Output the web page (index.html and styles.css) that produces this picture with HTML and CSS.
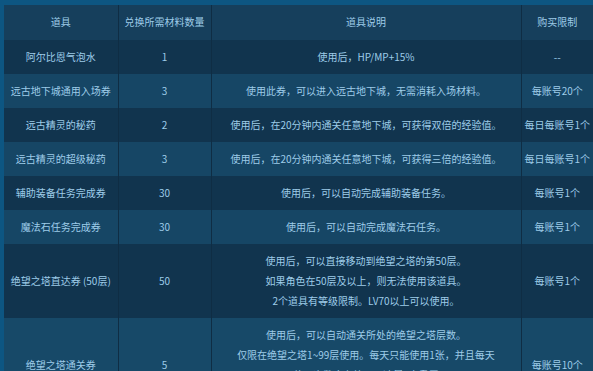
FILE: index.html
```html
<!DOCTYPE html>
<html lang="zh-CN">
<head>
<meta charset="utf-8">
<link rel="stylesheet" href="styles.css">
</head>
<body>
<div class="page">
<table class="items">
  <colgroup>
    <col class="c-name">
    <col class="c-qty">
    <col class="c-desc">
    <col class="c-limit">
  </colgroup>
  <thead>
    <tr class="head">
      <th>道具</th>
      <th>兑换所需材料数量</th>
      <th>道具说明</th>
      <th>购买限制</th>
    </tr>
  </thead>
  <tbody>
    <tr class="dark">
      <td>阿尔比恩气泡水</td>
      <td>1</td>
      <td>使用后，HP/MP+15%</td>
      <td>--</td>
    </tr>
    <tr class="light">
      <td>远古地下城通用入场券</td>
      <td>3</td>
      <td>使用此券，可以进入远古地下城，无需消耗入场材料。</td>
      <td>每账号20个</td>
    </tr>
    <tr class="dark">
      <td>远古精灵的秘药</td>
      <td>2</td>
      <td>使用后，在20分钟内通关任意地下城，可获得双倍的经验值。</td>
      <td>每日每账号1个</td>
    </tr>
    <tr class="light">
      <td>远古精灵的超级秘药</td>
      <td>3</td>
      <td>使用后，在20分钟内通关任意地下城，可获得三倍的经验值。</td>
      <td>每日每账号1个</td>
    </tr>
    <tr class="dark">
      <td>辅助装备任务完成券</td>
      <td>30</td>
      <td>使用后，可以自动完成辅助装备任务。</td>
      <td>每账号1个</td>
    </tr>
    <tr class="light">
      <td>魔法石任务完成券</td>
      <td>30</td>
      <td>使用后，可以自动完成魔法石任务。</td>
      <td>每账号1个</td>
    </tr>
    <tr class="dark">
      <td>绝望之塔直达券 (50层)</td>
      <td>50</td>
      <td>使用后，可以直接移动到绝望之塔的第50层。<br>如果角色在50层及以上，则无法使用该道具。<br>2个道具有等级限制。LV70以上可以使用。</td>
      <td>每账号1个</td>
    </tr>
    <tr class="light last">
      <td>绝望之塔通关券</td>
      <td>5</td>
      <td>使用后，可以自动通关所处的绝望之塔层数。<br>仅限在绝望之塔1~99层使用。每天只能使用1张，并且每天<br>可使用次数会在第二天凌晨6点重置。<br>该道具可以在账号金库中共享。</td>
      <td>每账号10个</td>
    </tr>
  </tbody>
</table>
</div>
</body>
</html>
```
FILE: styles.css
```css
html, body {
  margin: 0;
  padding: 0;
  background: #0d5682;
  overflow: hidden;
}
.page {
  padding: 5px 0 0 4px;
}
.items {
  border-collapse: collapse;
  table-layout: fixed;
  width: 589px;
  font-family: "Noto Sans CJK SC", "Noto Sans", sans-serif;
  font-size: 10px;
  line-height: 20px;
  color: #9ecce9;
}
.c-name { width: 114px; }
.c-qty { width: 93px; }
.c-desc { width: 310px; }
.c-limit { width: 72px; }
.items th,
.items td {
  padding: 7px 0;
  text-align: center;
  vertical-align: middle;
  font-weight: normal;
  border-left: 1px solid #0f2d44;
  white-space: nowrap;
  overflow: hidden;
}
.items th {
  padding: 7px 0 8px;
}
.items th:first-child,
.items td:first-child {
  border-left: none;
}
.head { background: #163f5c; }
.dark { background: #11344e; }
.light { background: #164665; }
.last { background: #174968; }
```
